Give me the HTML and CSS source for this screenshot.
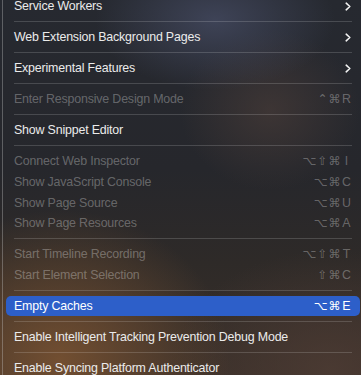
FILE: index.html
```html
<!DOCTYPE html>
<html>
<head>
<meta charset="utf-8">
<link rel="stylesheet" href="styles.css">
</head>
<body>
<div class="menu">
  <div class="item"><span class="label">Service Workers</span><svg class="chev" width="6" height="9" viewBox="0 0 6 9"><path d="M1.2 1.2 L4.8 4.5 L1.2 7.8" /></svg></div>
  <div class="sep"><i></i></div>
  <div class="item"><span class="label">Web Extension Background Pages</span><svg class="chev" width="6" height="9" viewBox="0 0 6 9"><path d="M1.2 1.2 L4.8 4.5 L1.2 7.8" /></svg></div>
  <div class="sep"><i></i></div>
  <div class="item"><span class="label">Experimental Features</span><svg class="chev" width="6" height="9" viewBox="0 0 6 9"><path d="M1.2 1.2 L4.8 4.5 L1.2 7.8" /></svg></div>
  <div class="sep"><i></i></div>
  <div class="item off"><span class="label">Enter Responsive Design Mode</span><span class="mods">⌃⌘</span><span class="key">R</span></div>
  <div class="sep"><i></i></div>
  <div class="item"><span class="label">Show Snippet Editor</span></div>
  <div class="sep"><i></i></div>
  <div class="item off"><span class="label">Connect Web Inspector</span><span class="mods">⌥⇧⌘</span><span class="key">I</span></div>
  <div class="item off"><span class="label">Show JavaScript Console</span><span class="mods">⌥⌘</span><span class="key">C</span></div>
  <div class="item off"><span class="label">Show Page Source</span><span class="mods">⌥⌘</span><span class="key">U</span></div>
  <div class="item off"><span class="label">Show Page Resources</span><span class="mods">⌥⌘</span><span class="key">A</span></div>
  <div class="sep"><i></i></div>
  <div class="item off"><span class="label">Start Timeline Recording</span><span class="mods">⌥⇧⌘</span><span class="key">T</span></div>
  <div class="item off"><span class="label">Start Element Selection</span><span class="mods">⇧⌘</span><span class="key">C</span></div>
  <div class="sep"><i></i></div>
  <div class="item active"><span class="label">Empty Caches</span><span class="mods">⌥⌘</span><span class="key">E</span></div>
  <div class="sep"><i></i></div>
  <div class="item"><span class="label">Enable Intelligent Tracking Prevention Debug Mode</span></div>
  <div class="sep"><i></i></div>
  <div class="item"><span class="label">Enable Syncing Platform Authenticator</span></div>
</div>
</body>
</html>
```
FILE: styles.css
```css
html, body {
  margin: 0;
  padding: 0;
}
body {
  width: 361px;
  height: 375px;
  overflow: hidden;
  font-family: "Liberation Sans", Arial, sans-serif;
  background:
    radial-gradient(ellipse 120px 70px at 215px 20px, rgba(70,76,100,0.75), rgba(70,76,100,0) 100%),
    radial-gradient(ellipse 90px 80px at 270px 110px, rgba(80,64,58,0.55), rgba(80,64,58,0) 100%),
    radial-gradient(ellipse 170px 150px at 60px 360px, rgba(120,82,50,0.9), rgba(120,82,50,0) 100%),
    radial-gradient(ellipse 160px 120px at 330px 370px, rgba(78,60,52,0.8), rgba(78,60,52,0) 100%),
    linear-gradient(180deg, #262930 0%, #26272c 45%, #2e2a28 70%, #3a302a 100%);
}
.menu {
  margin-left: 2px;
  margin-top: -4px;
  border-left: 1px solid rgba(200,200,200,0.35);
  padding: 0 1px 0 3px;
}
.item {
  height: 20.67px;
  display: flex;
  align-items: center;
  padding: 0 8.5px 0 8px;
  border-radius: 5px;
  color: #ebebeb;
  font-size: 12.4px;
  letter-spacing: -0.17px;
}
.item.off {
  color: rgba(255,255,255,0.3);
}
.item.active {
  background: #2d5fc9;
  color: #ffffff;
}
.label {
  flex: 1;
  white-space: nowrap;
}
.mods {
  font-family: "DejaVu Sans", sans-serif;
  font-size: 12px;
  letter-spacing: 1px;
}
.key {
  width: 10px;
  text-align: center;
  font-size: 12.4px;
  letter-spacing: 0;
}
.chev {
  margin-right: 1px;
}
.chev path {
  fill: none;
  stroke: #f2f2f2;
  stroke-width: 1.6;
  stroke-linecap: round;
  stroke-linejoin: round;
}
.sep {
  height: 10.33px;
  display: flex;
  align-items: center;
  padding: 0 8px;
}
.sep i {
  display: block;
  flex: 1;
  height: 1px;
  background: rgba(255,255,255,0.16);
}
```
